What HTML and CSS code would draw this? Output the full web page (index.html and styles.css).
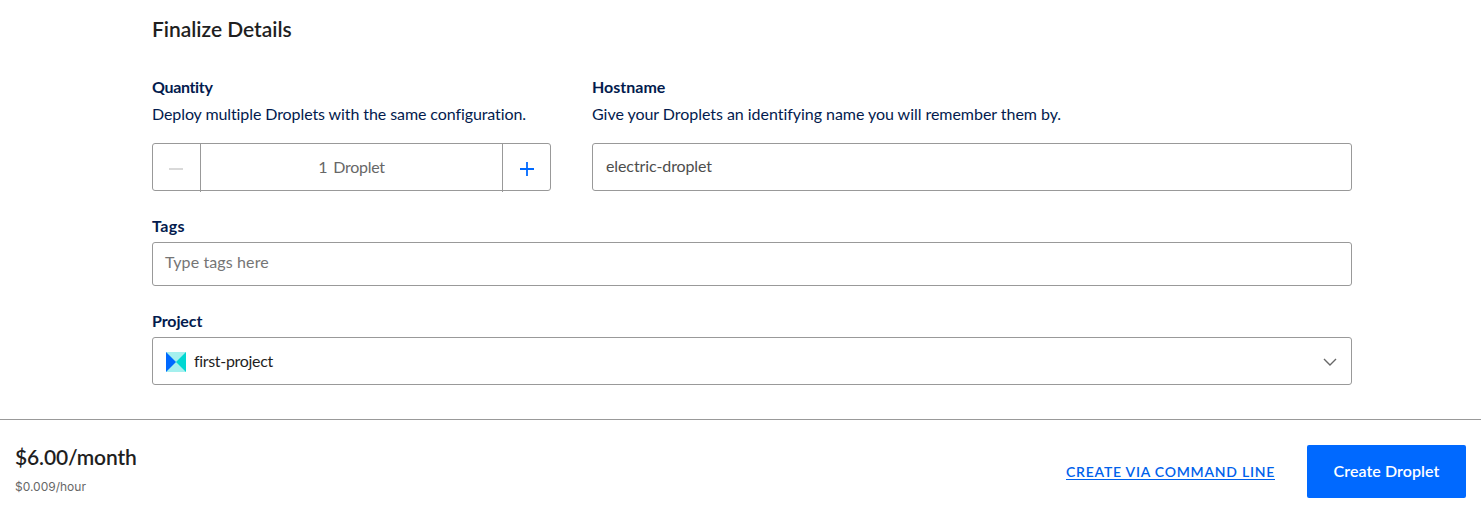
FILE: index.html
```html
<!DOCTYPE html>
<html lang="en">
<head>
<meta charset="utf-8">
<title>Create Droplet</title>
<link rel="stylesheet" href="styles.css">
</head>
<body>
<main class="details">
  <h2 class="title">Finalize Details</h2>
  <div class="columns">
    <section class="quantity">
      <h3 class="label label-quantity">Quantity</h3>
      <p class="hint">Deploy multiple Droplets with the same configuration.</p>
      <div class="stepper">
        <button class="step step-minus" disabled aria-label="Decrease"><svg width="14" height="14" viewBox="0 0 14 14"><path d="M0 7H14" stroke="#d9d9d9" stroke-width="2"/></svg></button>
        <div class="count"><span>1</span><span>Droplet</span></div>
        <button class="step step-plus" aria-label="Increase"><svg width="14" height="14" viewBox="0 0 14 14"><path d="M0 7H14M7 0V14" stroke="#0069ff" stroke-width="1.8"/></svg></button>
      </div>
    </section>
    <section class="hostname">
      <h3 class="label">Hostname</h3>
      <p class="hint hint-host">Give your Droplets an identifying name you will remember them by.</p>
      <div class="field field-host">electric-droplet</div>
    </section>
  </div>
  <section class="group">
    <h3 class="label label-tags">Tags</h3>
    <div class="field field-tags">Type tags here</div>
  </section>
  <section class="group">
    <h3 class="label label-project">Project</h3>
    <div class="field field-project">
      <svg class="project-icon" width="20" height="20" viewBox="0 0 20 20"><path fill="#a5f0ee" d="M0 0H20V20H0z"/><path fill="#0069ff" d="M0 0L10 10L0 20z"/><path fill="#00d7d2" d="M20 0L10 10L20 20z"/></svg>
      <span class="project-name">first-project</span>
      <svg class="chevron" width="14" height="8" viewBox="0 0 14 8"><path d="M1 1L7 7L13 1" fill="none" stroke="#676767" stroke-width="1.4"/></svg>
    </div>
  </section>
</main>
<footer class="bar">
  <div class="price">
    <div class="monthly">$6.00/month</div>
    <div class="hourly">$0.009/hour</div>
  </div>
  <a class="cli">CREATE VIA COMMAND LINE</a>
  <button class="create">Create Droplet</button>
</footer>
</body>
</html>
```
FILE: styles.css
```css
* { box-sizing: border-box; }
body { margin: 0; height: 513px; background: #fff; font: 16px/24px Lato, "Open Sans", sans-serif; font-variant-ligatures: none; color: #1f1f1f; overflow: hidden; }
h2, h3, p { margin: 0; }
button { font: inherit; border: 0; padding: 0; background: none; }
.details { width: 1200px; height: 419px; margin-left: 152px; padding-top: 16px; }
.title { font-size: 21px; line-height: 26px; font-weight: 600; letter-spacing: -0.02px; }
.columns { display: flex; gap: 41px; margin-top: 33px; }
.quantity { width: 399px; }
.hostname { width: 760px; }
.label { font-size: 16px; line-height: 24px; font-weight: 700; color: #031b4e; }
.label-quantity { letter-spacing: -0.35px; }
.label-tags { letter-spacing: 0.4px; }
.label-project { letter-spacing: -0.1px; }
.hint { margin-top: 3px; color: #031b4e; letter-spacing: -0.09px; }
.hint-host { letter-spacing: -0.04px; }
.stepper { display: flex; height: 48px; margin-top: 17px; border: 1px solid #999; border-radius: 3px; color: #676767; }
.step { display: flex; align-items: center; justify-content: center; width: 48px; height: 48px; padding-top: 1px; }
.step-minus { padding-right: 1px; border-right: 1px solid #999; }
.step-plus { border-left: 1px solid #999; }
.count { flex: 1; display: flex; gap: 6px; justify-content: center; line-height: 46px; letter-spacing: -0.25px; }
.field { display: flex; align-items: center; height: 48px; border: 1px solid #999; border-radius: 3px; }
.field-host { margin-top: 17px; padding: 0 0 2px 13px; color: #4d4d4d; letter-spacing: -0.1px; }
.group { margin-top: 23px; }
.group .label { margin-bottom: 4px; }
.field-tags { height: 44px; padding: 0 0 4px 12px; color: #757575; letter-spacing: 0.12px; }
.field-project { padding: 1px 14px 0 13px; }
.project-icon { margin-right: 8px; }
.project-name { padding-bottom: 2px; letter-spacing: -0.32px; }
.chevron { margin-left: auto; }
.bar { display: flex; align-items: center; height: 94px; padding: 9px 15px 0; border-top: 1px solid #999; }
.price { flex: 1; }
.monthly { padding-bottom: 9px; font-size: 21px; line-height: 23px; font-weight: 600; letter-spacing: -0.15px; }
.hourly { font: 12px/20px Inter, sans-serif; color: #676767; }
.cli { margin-right: 32px; padding-top: 2px; font-size: 14px; line-height: 14px; font-weight: 600; letter-spacing: 0.75px; color: #0061eb; border-bottom: 1px solid #0061eb; }
.create { width: 159px; height: 53px; border-radius: 2px; background: #0069ff; color: #fff; font-weight: 600; letter-spacing: 0.08px; }
```
